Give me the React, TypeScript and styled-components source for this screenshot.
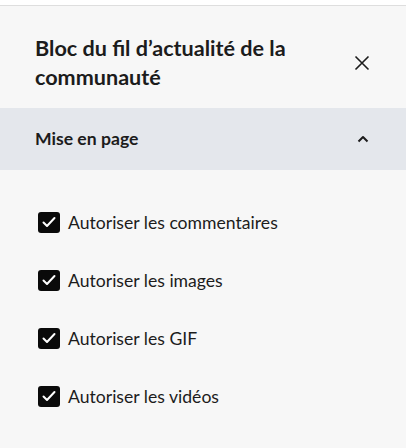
import styled, { createGlobalStyle } from 'styled-components';

const GlobalStyle = createGlobalStyle`
  body {
    margin: 0;
    background: #ffffff;
    font-family: Lato, 'Noto Sans', sans-serif;
    color: #1c1c1c;
  }
`;

const options = [
  'Autoriser les commentaires',
  'Autoriser les images',
  'Autoriser les GIF',
  'Autoriser les vidéos',
];

const Panel = styled.div`
  margin-top: 5px;
  border-top: 1px solid #dedede;
  background: #f7f7f7;
  min-height: 442px;
  display: flex;
  flex-direction: column;
`;

const Header = styled.div`
  display: flex;
  align-items: center;
  justify-content: space-between;
  padding: 28px 36px 16px 35px;
`;

const Title = styled.h2`
  margin: 0;
  font-size: 21.6px;
  line-height: 29px;
  font-weight: 700;
  max-width: 290px;
`;

const IconButton = styled.button`
  border: none;
  background: none;
  padding: 0;
  display: flex;
  color: #1c1c1c;
  cursor: pointer;
`;

const SectionHeader = styled.div`
  height: 62px;
  background: #e4e7ec;
  display: flex;
  align-items: center;
  justify-content: space-between;
  padding: 0 37px 0 35px;
`;

const SectionTitle = styled.span`
  font-size: 17.6px;
  font-weight: 700;
  margin-top: -2px;
`;

const OptionList = styled.ul`
  list-style: none;
  margin: 0;
  padding: 40px 0 0 38px;
  display: flex;
  flex-direction: column;
  gap: 34px;
`;

const Option = styled.li`
  display: flex;
  align-items: center;
  gap: 8px;
  height: 24px;
  font-size: 17.6px;
`;

const Box = styled.span`
  width: 22px;
  height: 21px;
  border-radius: 3px;
  background: #0a0a0a;
  display: flex;
  align-items: center;
  justify-content: center;
`;

const Check = () => (
  <Box>
    <svg width="16" height="16" viewBox="0 0 16 16" fill="none">
      <path d="M2.5 8.5l3.5 3.5 7.5-8" stroke="#fff" strokeWidth="2" strokeLinecap="round" strokeLinejoin="round" />
    </svg>
  </Box>
);

export default function App() {
  return (
    <>
      <GlobalStyle />
      <Panel>
        <Header>
          <Title>Bloc du fil d’actualité de la communauté</Title>
          <IconButton aria-label="Fermer">
            <svg width="16" height="16" viewBox="0 0 16 16" fill="none">
              <path d="M1.5 1.5l13 13M14.5 1.5l-13 13" stroke="currentColor" strokeWidth="1.6" />
            </svg>
          </IconButton>
        </Header>
        <SectionHeader>
          <SectionTitle>Mise en page</SectionTitle>
          <IconButton aria-label="Réduire">
            <svg width="12" height="8" viewBox="0 0 12 8" fill="none">
              <path d="M1.5 6.5L6 2l4.5 4.5" stroke="currentColor" strokeWidth="2" strokeLinejoin="round" />
            </svg>
          </IconButton>
        </SectionHeader>
        <OptionList>
          {options.map((label) => (
            <Option key={label}>
              <Check />
              {label}
            </Option>
          ))}
        </OptionList>
      </Panel>
    </>
  );
}
